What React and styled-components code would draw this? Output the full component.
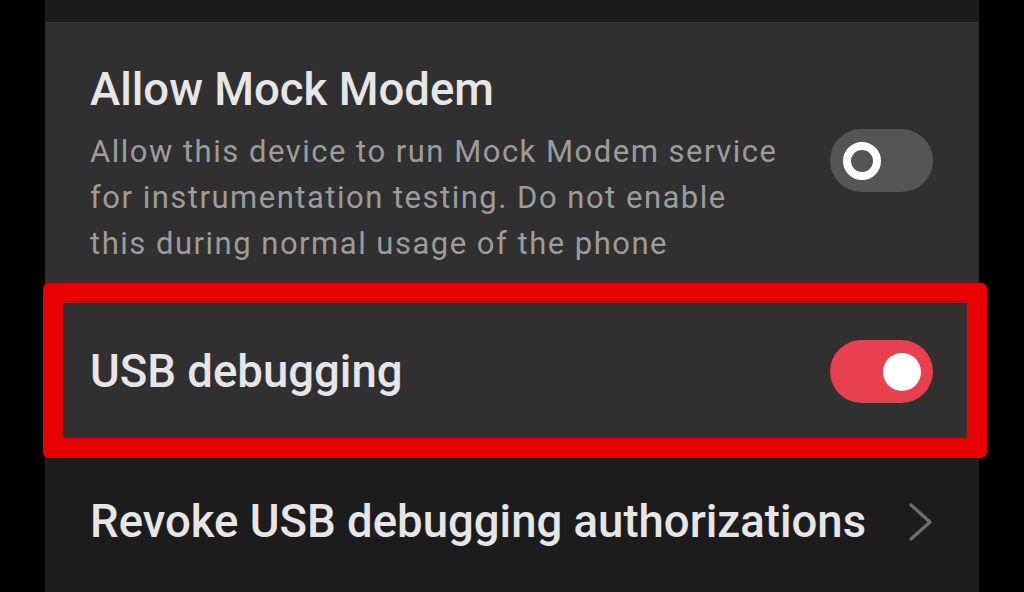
import styled, { createGlobalStyle } from "styled-components";

const GlobalStyle = createGlobalStyle`
  html, body {
    margin: 0;
    padding: 0;
    background: #000;
    overflow: hidden;
  }
  body {
    font-family: Roboto, "Noto Sans", "Liberation Sans", sans-serif;
  }
`;

const Page = styled.div`
  width: 1024px;
  height: 592px;
  display: flex;
  justify-content: center;
  background: #000;
`;

const Screen = styled.div`
  width: 934px;
  display: flex;
  flex-direction: column;
`;

const TopStrip = styled.div`
  height: 22px;
  background: #1b1b1b;
`;

const Card = styled.div`
  background: #303030;
  display: flex;
  flex-direction: column;
`;

const Row = styled.div`
  display: flex;
  align-items: ${(p) => (p.top ? "flex-start" : "center")};
  justify-content: space-between;
  padding: ${(p) => p.pad || "0 46px 0 45px"};
  gap: 40px;
`;

const TextBlock = styled.div`
  display: flex;
  flex-direction: column;
`;

const Title = styled.div`
  font-size: 45.5px;
  line-height: 52px;
  font-weight: 500;
  color: #e6e6e6;
  white-space: nowrap;
`;

const Summary = styled.div`
  margin-top: 13px;
  font-size: 31px;
  line-height: 46px;
  letter-spacing: 1.5px;
  color: #9c9c9c;
  width: 700px;
`;

const Highlight = styled.div`
  margin: 16px -8px 0 -2px;
  border: 20px solid #e80000;
  border-radius: 6px;
  background: #303030;
`;

const Track = styled.div`
  flex-shrink: 0;
  width: 103px;
  height: 63px;
  border-radius: 32px;
  background: ${(p) => (p.on ? "#e8404e" : "#555555")};
  display: flex;
  align-items: center;
  justify-content: ${(p) => (p.on ? "flex-end" : "flex-start")};
  padding: 0 12px 0 13px;
  box-sizing: border-box;
  margin-top: ${(p) => p.offset || 0}px;
`;

const Knob = styled.div`
  width: 38px;
  height: 38px;
  border-radius: 50%;
  box-sizing: border-box;
  background: ${(p) => (p.on ? "#ffffff" : "#555555")};
  border: ${(p) => (p.on ? "none" : "8px solid #ffffff")};
`;

const Revoke = styled.div`
  background: #1c1c1c;
  flex: 1;
`;

const Chevron = styled.svg`
  flex-shrink: 0;
  width: 24px;
  height: 38px;
`;

function Switch({ on, offset }) {
  return (
    <Track on={on} offset={offset}>
      <Knob on={on} />
    </Track>
  );
}

export default function App() {
  return (
    <>
      <GlobalStyle />
      <Page>
        <Screen>
          <TopStrip />
          <Card>
            <Row top pad="42px 46px 0 45px">
              <TextBlock>
                <Title>Allow Mock Modem</Title>
                <Summary>
                  Allow this device to run Mock Modem service for
                  instrumentation testing. Do not enable this during normal
                  usage of the phone
                </Summary>
              </TextBlock>
              <Switch offset={65} />
            </Row>
            <Highlight>
              <Row pad="37px 34px 35px 27px">
                <Title>USB debugging</Title>
                <Switch on />
              </Row>
            </Highlight>
          </Card>
          <Revoke>
            <Row pad="38px 46px 0 45px">
              <Title>Revoke USB debugging authorizations</Title>
              <Chevron viewBox="0 0 24 38">
                <polyline
                  points="2,2 21,19 2,36"
                  fill="none"
                  stroke="#6e6e6e"
                  strokeWidth="3.2"
                  strokeLinecap="round"
                  strokeLinejoin="round"
                />
              </Chevron>
            </Row>
          </Revoke>
        </Screen>
      </Page>
    </>
  );
}
